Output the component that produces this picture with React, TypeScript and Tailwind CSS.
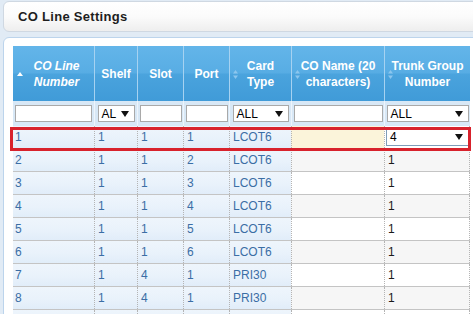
import React from "react";

const cols = [81, 43, 46, 46, 62, 93, 86];

const rows = [
  ["1", "1", "1", "1", "LCOT6", "", "4"],
  ["2", "1", "1", "2", "LCOT6", "", "1"],
  ["3", "1", "1", "3", "LCOT6", "", "1"],
  ["4", "1", "1", "4", "LCOT6", "", "1"],
  ["5", "1", "1", "5", "LCOT6", "", "1"],
  ["6", "1", "1", "6", "LCOT6", "", "1"],
  ["7", "1", "4", "1", "PRI30", "", "1"],
  ["8", "1", "4", "1", "PRI30", "", "1"],
  ["", "", "", "", "", "", ""],
];

function SortBoth() {
  return (
    <svg width="5" height="9" viewBox="0 0 5 9" className="absolute left-[3px] top-[24px]">
      <path d="M2.5 0 L5 3.5 L0 3.5 Z" fill="#8cc6ee" />
      <path d="M2.5 9 L5 5.5 L0 5.5 Z" fill="#8cc6ee" />
    </svg>
  );
}

function SortUp() {
  return (
    <svg width="6" height="4" viewBox="0 0 6 4" className="absolute left-[4px] top-[26px]">
      <path d="M3 0 L6 4 L0 4 Z" fill="#ffffff" />
    </svg>
  );
}

function Arrow() {
  return (
    <svg width="8" height="6" viewBox="0 0 8 6">
      <path d="M0 0 L8 0 L4 6 Z" fill="#111" />
    </svg>
  );
}

function Select({ label, w }: { label: string; w: number }) {
  return (
    <div
      className="h-[17px] bg-white border border-[#a9a9a9] flex items-center justify-between pl-[3px] pr-[5px] text-[12px] text-black overflow-hidden"
      style={{ width: w }}
    >
      <span>{label}</span>
      <Arrow />
    </div>
  );
}

function Input({ w }: { w: number }) {
  return <div className="h-[17px] bg-white border border-[#a9a9a9]" style={{ width: w }} />;
}

export default function App() {
  return (
    <div
      className="w-[473px] h-[314px] overflow-hidden bg-[#e1ebf5] relative"
      style={{ fontFamily: '"Liberation Sans", Arial, sans-serif' }}
    >
      <div className="pt-[1px] pl-[3px]">
        <div className="w-[490px] h-[31px] rounded-[6px] border border-[#cfd8e2] bg-gradient-to-b from-[#ffffff] via-[#fbfbfb] to-[#eeeeee] flex items-center pl-[14px]">
          <span className="text-[13px] font-bold text-[#1e1e1e] tracking-[0.3px]">CO Line Settings</span>
        </div>
        <div className="mt-[5px] w-[490px] h-[300px] rounded-[6px] border border-[#bcd4ec] bg-white pl-[9px] pt-[8px]">
          <div className="w-[457px]">
            {/* header */}
            <div className="flex h-[55px] bg-[linear-gradient(to_bottom,#63b5e9_0%,#58ade4_48%,#4aa3dd_52%,#409bd8_100%)] text-white font-bold text-[12px] leading-[16px]">
              {[
                { t: ["CO Line", "Number"], italic: true, up: true },
                { t: ["Shelf"] },
                { t: ["Slot"] },
                { t: ["Port"] },
                { t: ["Card", "Type"], s: true },
                { t: ["CO Name (20", "characters)"], s: true },
                { t: ["Trunk Group", "Number"], s: true },
              ].map((h, i) => (
                <div
                  key={i}
                  className={`relative flex flex-col items-center justify-center text-center ${i > 0 ? "border-l border-[#a6d2f1]" : ""} ${h.italic ? "italic" : ""}`}
                  style={{ width: cols[i] }}
                >
                  {h.up && <SortUp />}
                  {h.s && <SortBoth />}
                  {h.t.map((l, j) => (
                    <span key={j} className={h.italic ? "pl-[6px]" : ""}>{l}</span>
                  ))}
                </div>
              ))}
            </div>
            {/* filter row */}
            <div className="flex h-[25px] bg-[#d8e8f6] items-center">
              <div className="flex justify-center" style={{ width: cols[0] }}><Input w={77} /></div>
              <div className="flex justify-center border-l border-[#eef5fc] h-full items-center" style={{ width: cols[1] }}><Select label="AL" w={37} /></div>
              <div className="flex justify-center border-l border-[#eef5fc] h-full items-center" style={{ width: cols[2] }}><Input w={42} /></div>
              <div className="flex justify-center border-l border-[#eef5fc] h-full items-center" style={{ width: cols[3] }}><Input w={42} /></div>
              <div className="flex justify-center border-l border-[#eef5fc] h-full items-center" style={{ width: cols[4] }}><Select label="ALL" w={56} /></div>
              <div className="flex justify-center border-l border-[#eef5fc] h-full items-center" style={{ width: cols[5] }}><Input w={89} /></div>
              <div className="flex justify-center border-l border-[#eef5fc] h-full items-center" style={{ width: cols[6] }}><Select label="ALL" w={82} /></div>
            </div>
            {/* data rows */}
            {rows.map((r, ri) => (
              <div key={ri} className="flex h-[23px] border-b border-[#c4c4c4] text-[12px]">
                {r.map((c, ci) => {
                  const blue = ci < 5;
                  const even = ri % 2 === 1;
                  let bg = "";
                  if (blue) bg = "bg-[linear-gradient(to_bottom,#eef5fc_0%,#e9f2fb_55%,#e1edf9_100%)]";
                  else if (ri === 0 && ci === 5) bg = "bg-[#fbf4da]";
                  else bg = even ? "bg-[#f6f6f6]" : "bg-white";
                  return (
                    <div
                      key={ci}
                      className={`flex items-center ${ci === 0 ? "pl-[2px]" : "pl-[3px] border-l border-dotted border-[#b4b4b4]"} ${ci === 6 ? "border-r border-dotted border-[#b4b4b4]" : ""} ${bg} ${blue ? "text-[#3b6ea5]" : "text-[#1a1a1a]"}`}
                      style={{ width: cols[ci] }}
                    >
                      {ri === 0 && ci === 6 ? (
                        <div className="-ml-[2px] w-[83px] h-[17px] bg-white border border-[#7f9db9] flex items-center justify-between pl-[3px] pr-[5px] text-black">
                          <span>4</span>
                          <Arrow />
                        </div>
                      ) : (
                        c
                      )}
                    </div>
                  );
                })}
              </div>
            ))}
          </div>
        </div>
      </div>
      {/* red highlight annotation */}
      <div className="absolute left-[10px] top-[127px] w-[461px] h-[24px] border-[3px] border-[#d8222c] pointer-events-none" />
    </div>
  );
}
